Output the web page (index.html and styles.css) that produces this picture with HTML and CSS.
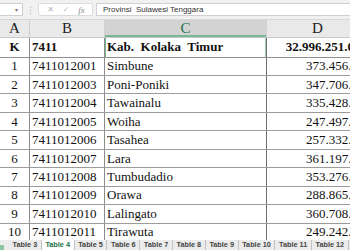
FILE: index.html
```html
<!DOCTYPE html>
<html>
<head>
<meta charset="utf-8">
<link rel="stylesheet" href="styles.css">
</head>
<body>
<div class="app">
  <div class="fbar">
    <div class="namebox"><span class="caret">▾</span></div>
    <div class="dots">⋮</div>
    <div class="fxbox">
      <span class="fxi">✕</span>
      <span class="fxi">✓</span>
      <span class="fxi fx">fx</span>
    </div>
    <div class="finput">Provinsi&nbsp; Sulawesi Tenggara</div>
  </div>
  <div class="sheet">
    <div class="row hdr">
      <div class="c a">A</div>
      <div class="c b">B</div>
      <div class="c cc sel">C</div>
      <div class="c d">D</div>
    </div>
    <div class="row first">
      <div class="c a bold">K</div>
      <div class="c b bold">7411</div>
      <div class="c cc bold active">Kab.&nbsp; Kolaka&nbsp; Timur</div>
      <div class="c d bold num total">32.996.251.037</div>
    </div>
    <div class="row"><div class="c a">1</div><div class="c b">7411012001</div><div class="c cc">Simbune</div><div class="c d num">373.456.120</div></div>
    <div class="row"><div class="c a">2</div><div class="c b">7411012003</div><div class="c cc">Poni-Poniki</div><div class="c d num">347.706.310</div></div>
    <div class="row"><div class="c a">3</div><div class="c b">7411012004</div><div class="c cc">Tawainalu</div><div class="c d num">335.428.540</div></div>
    <div class="row"><div class="c a">4</div><div class="c b">7411012005</div><div class="c cc">Woiha</div><div class="c d num">247.497.200</div></div>
    <div class="row"><div class="c a">5</div><div class="c b">7411012006</div><div class="c cc">Tasahea</div><div class="c d num">257.332.810</div></div>
    <div class="row"><div class="c a">6</div><div class="c b">7411012007</div><div class="c cc">Lara</div><div class="c d num">361.197.450</div></div>
    <div class="row"><div class="c a">7</div><div class="c b">7411012008</div><div class="c cc">Tumbudadio</div><div class="c d num">353.276.390</div></div>
    <div class="row"><div class="c a">8</div><div class="c b">7411012009</div><div class="c cc">Orawa</div><div class="c d num">288.865.170</div></div>
    <div class="row"><div class="c a">9</div><div class="c b">7411012010</div><div class="c cc">Lalingato</div><div class="c d num">360.708.620</div></div>
    <div class="row"><div class="c a">10</div><div class="c b">7411012011</div><div class="c cc">Tirawuta</div><div class="c d num">249.242.880</div></div>
  </div>
  <div class="tabs">
    <span class="more"></span>
    <span class="tab">Table 3</span>
    <span class="tab on">Table 4</span>
    <span class="tab">Table 5</span>
    <span class="tab">Table 6</span>
    <span class="tab">Table 7</span>
    <span class="tab">Table 8</span>
    <span class="tab">Table 9</span>
    <span class="tab">Table 10</span>
    <span class="tab">Table 11</span>
    <span class="tab">Table 12</span>
  </div>
</div>
</body>
</html>
```

FILE: styles.css
```css
html, body {
  margin: 0;
  padding: 0;
  background: #ffffff;
}
.app {
  width: 350px;
  height: 250px;
  overflow: hidden;
  display: flex;
  flex-direction: column;
  font-family: "Liberation Serif", serif;
}
.fbar {
  height: 20px;
  flex: none;
  background: #f1f1f1;
  display: flex;
  align-items: center;
  box-sizing: border-box;
  border-bottom: 1px solid #d6d6d6;
}
.namebox {
  width: 23px;
  height: 13px;
  background: #fff;
  border: 1px solid #d0d0d0;
  border-left: none;
  box-sizing: border-box;
  display: flex;
  justify-content: flex-end;
  align-items: center;
  padding-right: 4px;
}
.caret {
  font-family: "DejaVu Sans", sans-serif;
  font-size: 6px;
  color: #777;
}
.dots {
  width: 15px;
  text-align: center;
  color: #b5b5b5;
  font-family: "DejaVu Sans", sans-serif;
  font-size: 9px;
}
.fxbox {
  width: 55px;
  height: 13px;
  background: #fff;
  border: 1px solid #dcdcdc;
  border-radius: 2px;
  box-sizing: border-box;
  display: flex;
  align-items: center;
  justify-content: space-around;
  padding: 0 3px 0 4px;
}
.fxi {
  font-family: "DejaVu Sans", sans-serif;
  font-size: 8px;
  color: #b8b8b8;
}
.fx {
  font-family: "Liberation Serif", serif;
  font-style: italic;
  color: #8a8a8a;
  font-size: 9px;
}
.finput {
  margin-left: 3px;
  flex: 1;
  height: 13px;
  background: #fff;
  border: 1px solid #d0d0d0;
  border-right: none;
  box-sizing: border-box;
  font-family: "Liberation Sans", sans-serif;
  font-size: 8px;
  line-height: 11px;
  padding-left: 6px;
  color: #333;
  white-space: nowrap;
}
.sheet {
  flex: 1;
  overflow: hidden;
}
.row {
  display: flex;
  height: 18.44px;
  box-sizing: border-box;
  border-bottom: 1px solid #9c9c9c;
}
.row.hdr {
  height: 18px;
  background: #e9e9e9;
  border-bottom: 1px solid #c9c9c9;
}
.row.first {
  height: 19.6px;
  border-bottom: 1px solid #8f8f8f;
}
.c {
  flex: none;
  box-sizing: border-box;
  border-right: 1px solid #8d8d8d;
  font-size: 13px;
  color: #111;
  white-space: nowrap;
  overflow: hidden;
  display: flex;
  align-items: center;
}
.a { width: 30px; justify-content: center; }
.b { width: 75px; padding-left: 2px; }
.cc { width: 162px; padding-left: 2px; border-right-color: #6e6e6e; }
.d { width: 108px; }
.num { justify-content: flex-end; padding-right: 3px; }
.num.total { padding-right: 7px; }
.bold { font-weight: bold; }
.hdr .c {
  justify-content: center;
  font-size: 15px;
  color: #222;
  border-right: 1px solid #d0d0d0;
  padding: 0;
}
.hdr .d { width: 102px; }
.hdr .sel {
  background: #d3d3d3;
  color: #217346;
  box-shadow: inset 0 -2px 0 #76b993;
}
.active {
  box-shadow: inset 1px 0 0 #74b590, inset -1px 0 0 #9fcfb3;
}
.tabs {
  height: 10px;
  flex: none;
  background: #ececec;
  display: flex;
  align-items: stretch;
  font-family: "Liberation Sans", sans-serif;
  font-weight: bold;
  font-size: 7.3px;
  color: #444;
  white-space: nowrap;
  overflow: hidden;
}
.more {
  flex: none;
  width: 4px;
  margin-right: 5px;
  background: linear-gradient(#ececec 0 55%, #8cc5a3 55%);
}
.tab {
  flex: none;
  display: flex;
  align-items: center;
  padding: 0 3.6px;
  border-right: 1px solid #c2c2c2;
  line-height: 10px;
}
.tab.on {
  background: #fff;
  color: #217346;
}
```
